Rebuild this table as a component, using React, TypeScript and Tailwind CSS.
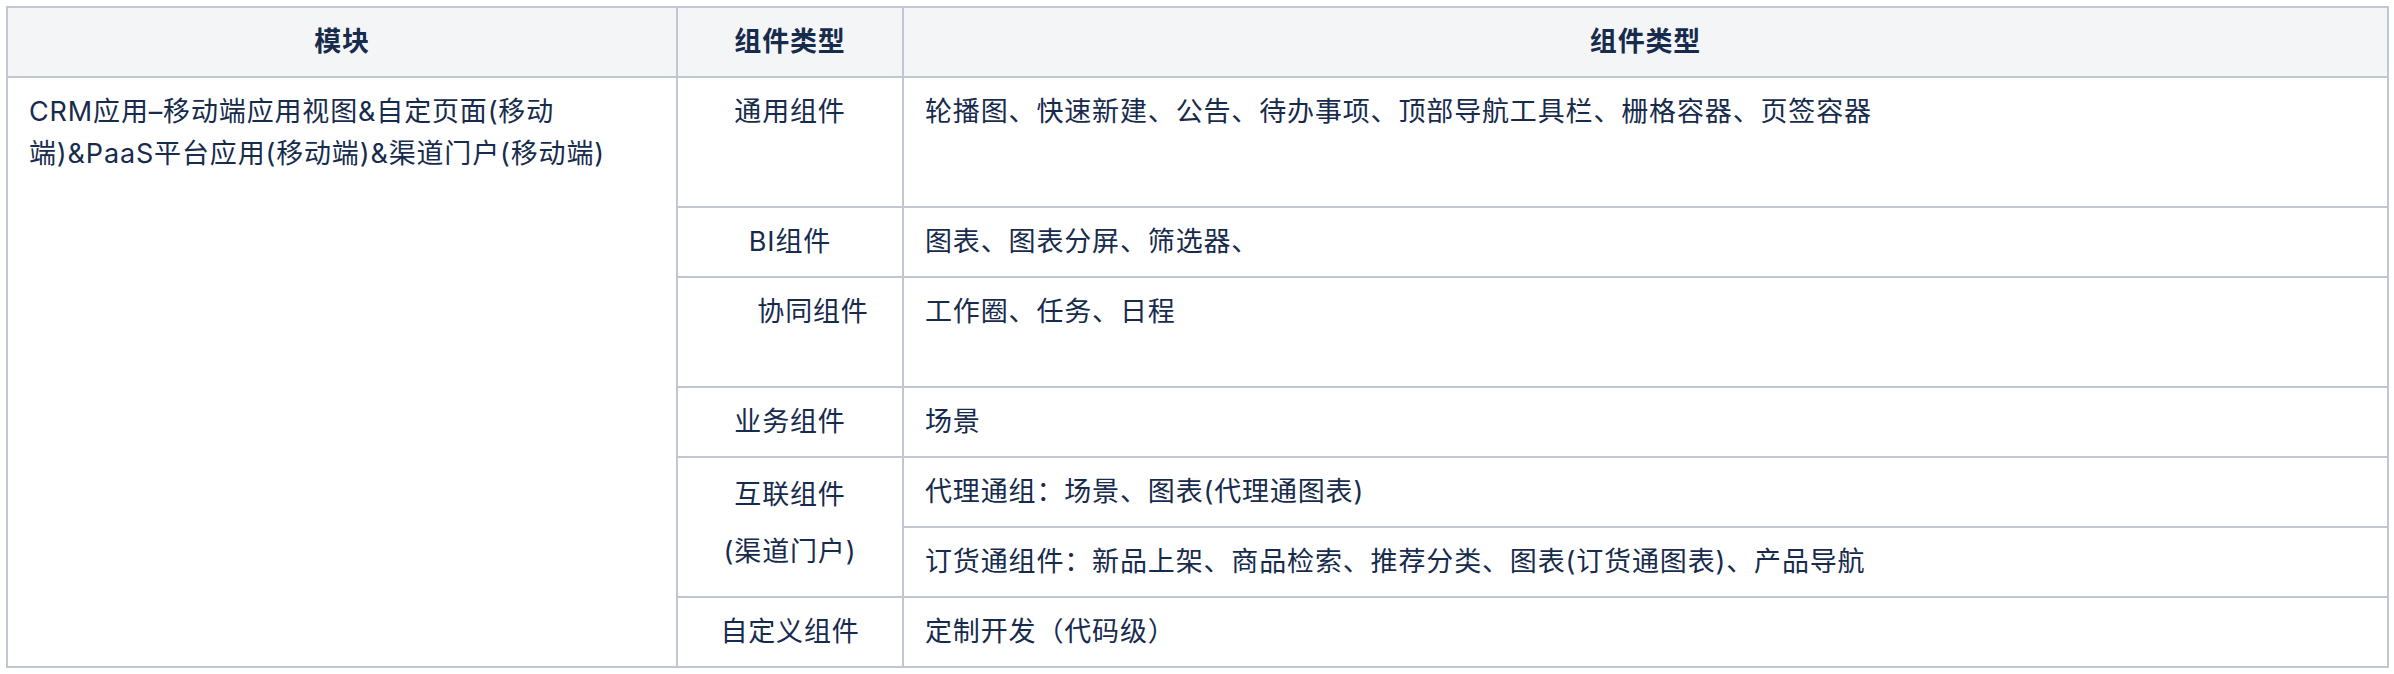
import React from "react";

const cell = "border-r-2 border-b-2 border-[#c1c7d0] pt-[13px] leading-[42px]";

export default function App() {
  return (
    <div
      className="w-[2394px] h-[674px] bg-white pt-[6px] pl-[6px] text-[27px] tracking-[0.85px] text-[#172b4d]"
      style={{ fontFamily: '"Inter", "Noto Sans CJK SC", sans-serif' }}
    >
      <div className="grid grid-cols-[670px_226px_1485px] grid-rows-[70px_130px_70px_110px_70px_70px_70px_70px] w-[2383px] border-l-2 border-t-2 border-[#c1c7d0]">
        {/* header */}
        <div className="border-r-2 border-b-2 border-[#c1c7d0] bg-[#f4f5f7] flex items-center justify-center font-bold">模块</div>
        <div className="border-r-2 border-b-2 border-[#c1c7d0] bg-[#f4f5f7] flex items-center justify-center font-bold">组件类型</div>
        <div className="border-r-2 border-b-2 border-[#c1c7d0] bg-[#f4f5f7] flex items-center justify-center font-bold">组件类型</div>

        {/* module column */}
        <div className={`${cell} row-span-7 px-[21px]`}>
          CRM应用–移动端应用视图&amp;自定页面(移动
          <br />
          端)&amp;PaaS平台应用(移动端)&amp;渠道门户(移动端)
        </div>

        <div className={`${cell} text-center`}>通用组件</div>
        <div className={`${cell} px-[21px]`}>轮播图、快速新建、公告、待办事项、顶部导航工具栏、栅格容器、页签容器</div>

        <div className={`${cell} text-center`}>BI组件</div>
        <div className={`${cell} px-[21px]`}>图表、图表分屏、筛选器、</div>

        <div className={`${cell} text-center pl-[46px]`}>协同组件</div>
        <div className={`${cell} px-[21px]`}>工作圈、任务、日程</div>

        <div className={`${cell} text-center`}>业务组件</div>
        <div className={`${cell} px-[21px]`}>场景</div>

        <div className="border-r-2 border-b-2 border-[#c1c7d0] row-span-2 pt-[16px] leading-[42px] flex flex-col items-center gap-[15px]">
          <div>互联组件</div>
          <div>(渠道门户)</div>
        </div>
        <div className={`${cell} px-[21px]`}>代理通组：场景、图表(代理通图表)</div>
        <div className={`${cell} px-[21px]`}>订货通组件：新品上架、商品检索、推荐分类、图表(订货通图表)、产品导航</div>

        <div className={`${cell} text-center`}>自定义组件</div>
        <div className={`${cell} px-[21px]`}>定制开发（代码级）</div>
      </div>
    </div>
  );
}
